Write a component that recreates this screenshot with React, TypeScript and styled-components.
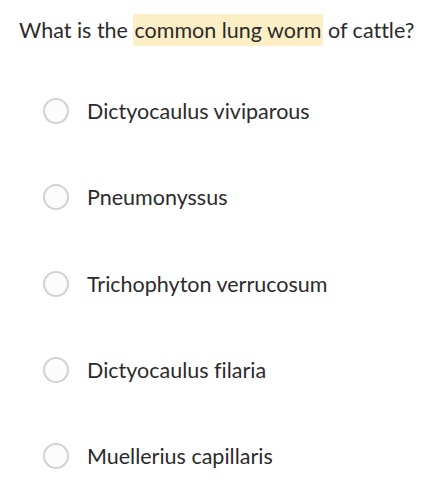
import { useState } from "react";
import styled, { createGlobalStyle } from "styled-components";

const options = [
  "Dictyocaulus viviparous",
  "Pneumonyssus",
  "Trichophyton verrucosum",
  "Dictyocaulus filaria",
  "Muellerius capillaris",
];

const GlobalStyle = createGlobalStyle`
  body {
    margin: 0;
    background: #ffffff;
    font-family: Lato, "Open Sans", sans-serif;
    color: #2b2b2b;
    font-variant-ligatures: none;
  }
`;

export default function App() {
  const [selected, setSelected] = useState<string | null>(null);

  return (
    <Page>
      <GlobalStyle />
      <Question>
        What is the <Highlight>common lung worm</Highlight> of cattle?
      </Question>
      <OptionList>
        {options.map((option) => (
          <OptionRow key={option} onClick={() => setSelected(option)}>
            <Radio $checked={selected === option} />
            <OptionText>{option}</OptionText>
          </OptionRow>
        ))}
      </OptionList>
    </Page>
  );
}

const Page = styled.main`
  width: 436px;
  min-height: 494px;
  padding-top: 14px;
  box-sizing: border-box;
`;

const Question = styled.h1`
  margin: 0;
  padding-left: 19px;
  font-size: 21.5px;
  font-weight: 400;
  line-height: 32px;
  white-space: nowrap;
`;

const Highlight = styled.span`
  display: inline-block;
  background: #fdefc5;
  padding: 0 1px;
`;

const OptionList = styled.ul`
  list-style: none;
  margin: 22px 0 0;
  padding: 0;
  display: flex;
  flex-direction: column;
`;

const OptionRow = styled.li`
  display: flex;
  align-items: center;
  gap: 18px;
  height: 86.25px;
  padding-left: 43px;
  cursor: pointer;
`;

const Radio = styled.span<{ $checked: boolean }>`
  width: 26px;
  height: 26px;
  box-sizing: border-box;
  border-radius: 50%;
  border: 2px solid ${({ $checked }) => ($checked ? "#4a90e2" : "#d2d2d2")};
  background: ${({ $checked }) => ($checked ? "#4a90e2" : "#fdfcfd")};
  box-shadow: ${({ $checked }) => ($checked ? "inset 0 0 0 4px #ffffff" : "none")};
  flex: 0 0 auto;
`;

const OptionText = styled.span`
  font-size: 21.5px;
  line-height: 32px;
`;
